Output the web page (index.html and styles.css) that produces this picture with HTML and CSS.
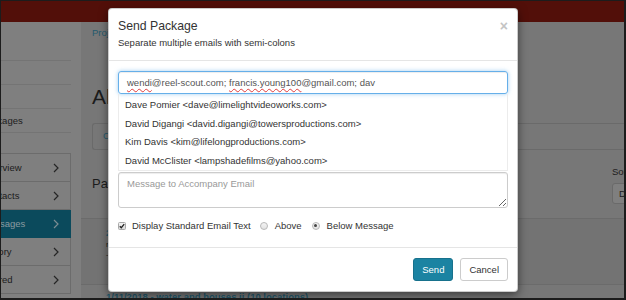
FILE: index.html
```html
<!DOCTYPE html>
<html>
<head>
<meta charset="utf-8">
<link rel="stylesheet" href="styles.css">
</head>
<body>
<div class="frame">
  <div class="topbar"></div>
  <div class="layout">
    <aside class="sidebar">
      <ul class="side-links">
        <li></li>
        <li></li>
        <li>Packages</li>
      </ul>
      <ul class="side-nav">
        <li><span>Overview</span><svg class="chev" width="6" height="10" viewBox="0 0 6 10"><polyline points="1,1 5,5 1,9"/></svg></li>
        <li><span>Contacts</span><svg class="chev" width="6" height="10" viewBox="0 0 6 10"><polyline points="1,1 5,5 1,9"/></svg></li>
        <li class="active"><span>Messages</span><svg class="chev" width="6" height="10" viewBox="0 0 6 10"><polyline points="1,1 5,5 1,9"/></svg></li>
        <li><span>History</span><svg class="chev" width="6" height="10" viewBox="0 0 6 10"><polyline points="1,1 5,5 1,9"/></svg></li>
        <li><span>Shared</span><svg class="chev" width="6" height="10" viewBox="0 0 6 10"><polyline points="1,1 5,5 1,9"/></svg></li>
      </ul>
    </aside>
    <main class="main">
      <div class="crumb"><a>Projects</a> / Packages</div>
      <h1 class="page-title">All Packages</h1>
      <div class="toolbar"><a>Create Package</a></div>
      <div class="section-head">
        <h3>Packages</h3>
        <div class="sort">
          <div class="sort-label">Sort by</div>
          <div class="sort-select">Date</div>
        </div>
      </div>
      <div class="list">
        <div class="row row-a">
          <a>2/05/2018 - downtown lofts (6 locations)</a>
          <div class="meta">recipients: 3</div>
          <div class="meta">-</div>
        </div>
        <div class="row">
          <a>1/11/2018 - water and houses ii (10 locations)</a>
        </div>
      </div>
    </main>
  </div>

  <div class="modal">
    <div class="modal-header">
      <div>
        <div class="modal-title">Send Package</div>
        <div class="modal-sub">Separate multiple emails with semi-colons</div>
      </div>
      <span class="close">×</span>
    </div>
    <div class="modal-body">
      <div class="email-input"><span class="sp">wendi</span>@reel-scout.com; <span class="sp">francis.young100</span>@gmail.com; dav</div>
      <ul class="suggest">
        <li>Dave Pomier &lt;dave@limelightvideoworks.com&gt;</li>
        <li>David Digangi &lt;david.digangi@towersproductions.com&gt;</li>
        <li>Kim Davis &lt;kim@lifelongproductions.com&gt;</li>
        <li>David McClister &lt;lampshadefilms@yahoo.com&gt;</li>
      </ul>
      <textarea class="message" placeholder="Message to Accompany Email"></textarea>
      <div class="options">
        <span class="cb"><svg width="6" height="6" viewBox="0 0 6 6"><polyline points="0.8,3.2 2.3,4.7 5.2,1.2"/></svg></span>
        <span class="opt-label">Display Standard Email Text</span>
        <span class="rb"></span>
        <span class="opt-label">Above</span>
        <span class="rb on"></span>
        <span class="opt-label">Below Message</span>
      </div>
    </div>
    <div class="modal-footer">
      <button class="btn btn-send">Send</button>
      <button class="btn btn-cancel">Cancel</button>
    </div>
  </div>
</div>
</body>
</html>
```

FILE: styles.css
```css
html, body {
  margin: 0;
  padding: 0;
}
body {
  font-family: "Liberation Sans", Arial, sans-serif;
  font-size: 9.5px;
  line-height: 1.43;
  color: #333;
}
ul {
  margin: 0;
  padding: 0;
  list-style: none;
}
.frame {
  position: relative;
  width: 626px;
  height: 300px;
  box-sizing: border-box;
  border: 1px solid #1c1c1c;
  border-right-width: 2px;
  border-bottom-width: 2px;
  overflow: hidden;
  display: flex;
  flex-direction: column;
  background: #777777;
}
.topbar {
  flex: none;
  height: 21px;
  background: #520f09;
}
.layout {
  flex: 1;
  display: flex;
  min-height: 0;
}

/* sidebar */
.sidebar {
  flex: none;
  width: 80px;
  background: #7f7f7f;
  color: #1c1c1c;
}
.side-links {
  margin-top: 38px;
  width: 70px;
}
.side-links li {
  height: 23px;
  line-height: 23px;
  border-top: 1px solid #747474;
  padding-left: 0;
  text-indent: -20px;
  white-space: nowrap;
}
.side-links li:last-child {
  border-bottom: 1px solid #747474;
}
.side-nav {
  margin-top: 20px;
  margin-left: -32px;
  width: 102px;
  border-top: 1px solid #6c6c6c;
}
.side-nav li {
  height: 27px;
  border: 1px solid #6c6c6c;
  border-top: none;
  display: flex;
  align-items: center;
  justify-content: space-between;
  padding: 0 11px 0 12px;
  white-space: nowrap;
}
.side-nav li.active {
  background: #0b4a5c;
  border-color: #0b4a5c;
  color: #8a9aa0;
}
.chev polyline {
  fill: none;
  stroke: #262626;
  stroke-width: 1.2;
}
.side-nav li.active .chev polyline {
  stroke: #7c8d93;
}

/* main */
.main {
  flex: 1;
  min-width: 0;
  padding: 4px 0 0 11px;
  color: #1c1c1c;
}
.main a {
  color: #245a6d;
}
.crumb {
  white-space: nowrap;
}
.page-title {
  margin: 45px 0 0;
  font-size: 21px;
  font-weight: 500;
  line-height: 1.1;
  white-space: nowrap;
}
.toolbar {
  margin-top: 15px;
  height: 25px;
  border: 1px solid #6a6a6a;
  border-right: none;
  border-radius: 3px 0 0 3px;
  padding-left: 10px;
  display: flex;
  align-items: center;
  white-space: nowrap;
}
.section-head {
  margin-top: 15px;
  display: flex;
  justify-content: space-between;
  align-items: flex-start;
}
.section-head h3 {
  margin: 10px 0 0;
  font-size: 13px;
  font-weight: 500;
  line-height: 18px;
}
.sort {
  width: 12px;
  white-space: nowrap;
}
.sort-select {
  margin-top: 5px;
  width: 60px;
  height: 19px;
  border: 1px solid #6a6a6a;
  border-radius: 3px;
  background: #7f7f7f;
  padding-left: 6px;
  line-height: 19px;
}
.list {
  margin: 14px 0 0 -11px;
}
.row {
  border-top: 1px solid #6b6b6b;
  padding: 5px 0 0 25px;
  white-space: nowrap;
}
.row-a {
  background: #737373;
  padding: 7px 0 24px 25px;
}
.row a {
  font-weight: bold;
  display: block;
}
.row-a .meta {
  font-size: 8px;
  line-height: 10px;
}

/* modal */
.modal {
  position: absolute;
  top: 7px;
  left: 107px;
  width: 410px;
  box-sizing: border-box;
  background: #fff;
  border: 1px solid rgba(0, 0, 0, 0.2);
  border-radius: 4px;
  box-shadow: 0 3px 10px rgba(0, 0, 0, 0.5);
}
.modal-header {
  display: flex;
  justify-content: space-between;
  align-items: flex-start;
  padding: 9px 9px 11px;
  border-bottom: 1px solid #e5e5e5;
}
.modal-title {
  font-size: 12.25px;
  line-height: 17.5px;
  color: #333;
}
.modal-sub {
  font-size: 9.5px;
  line-height: 13.6px;
}
.close {
  font-size: 14px;
  font-weight: bold;
  line-height: 14px;
  color: #c4c4c4;
  margin-top: 1px;
}
.modal-body {
  padding: 10px 9px 14px;
}
.email-input {
  box-sizing: border-box;
  height: 23px;
  border: 1px solid #66afe9;
  border-radius: 3px;
  box-shadow: inset 0 1px 1px rgba(0, 0, 0, 0.075), 0 0 4px rgba(102, 175, 233, 0.6);
  padding: 0 8px;
  line-height: 21px;
  color: #555;
  white-space: nowrap;
}
.sp {
  text-decoration: underline wavy #e03c3c;
  text-decoration-thickness: 1px;
  text-underline-offset: 2px;
}
.suggest {
  border: 1px solid #ececec;
  border-top: none;
  padding-top: 2px;
}
.suggest li {
  line-height: 18.5px;
  padding-left: 6px;
  color: #333;
}
.message {
  display: block;
  box-sizing: border-box;
  width: 100%;
  height: 36px;
  margin: 1px 0 0;
  padding: 4px 8px;
  border: 1px solid #ccc;
  border-radius: 3px;
  box-shadow: inset 0 1px 1px rgba(0, 0, 0, 0.075);
  font-family: "Liberation Sans", Arial, sans-serif;
  font-size: 9.5px;
  line-height: 13.6px;
  color: #555;
  resize: vertical;
}
.message::placeholder {
  color: #999;
}
.options {
  margin-top: 11px;
  display: flex;
  align-items: center;
  line-height: 13.6px;
  color: #333;
}
.cb {
  box-sizing: border-box;
  width: 8px;
  height: 8px;
  border: 1px solid #a8a8a8;
  border-radius: 1.5px;
  background: linear-gradient(#f2f2f2, #dadada);
  display: flex;
  align-items: center;
  justify-content: center;
  margin-right: 6px;
}
.cb polyline {
  fill: none;
  stroke: #222;
  stroke-width: 1.3;
}
.rb {
  box-sizing: border-box;
  width: 8px;
  height: 8px;
  border: 1px solid #b8b8b8;
  border-radius: 50%;
  background: linear-gradient(#f4f4f4, #e2e2e2);
  margin: 0 7px 0 9px;
  display: flex;
  align-items: center;
  justify-content: center;
}
.rb.on {
  margin-left: 10px;
}
.rb.on::after {
  content: "";
  width: 3px;
  height: 3px;
  border-radius: 50%;
  background: #444;
}
.modal-footer {
  display: flex;
  justify-content: flex-end;
  gap: 7px;
  padding: 10px 9px;
  border-top: 1px solid #e5e5e5;
}
.btn {
  box-sizing: border-box;
  height: 23px;
  padding: 0 8px;
  border: 1px solid #ccc;
  border-radius: 3px;
  font-family: "Liberation Sans", Arial, sans-serif;
  font-size: 9.5px;
  line-height: 21px;
  background: #fff;
  color: #333;
}
.btn-send {
  background: #1b83a2;
  border-color: #17718c;
  color: #fff;
}
```
